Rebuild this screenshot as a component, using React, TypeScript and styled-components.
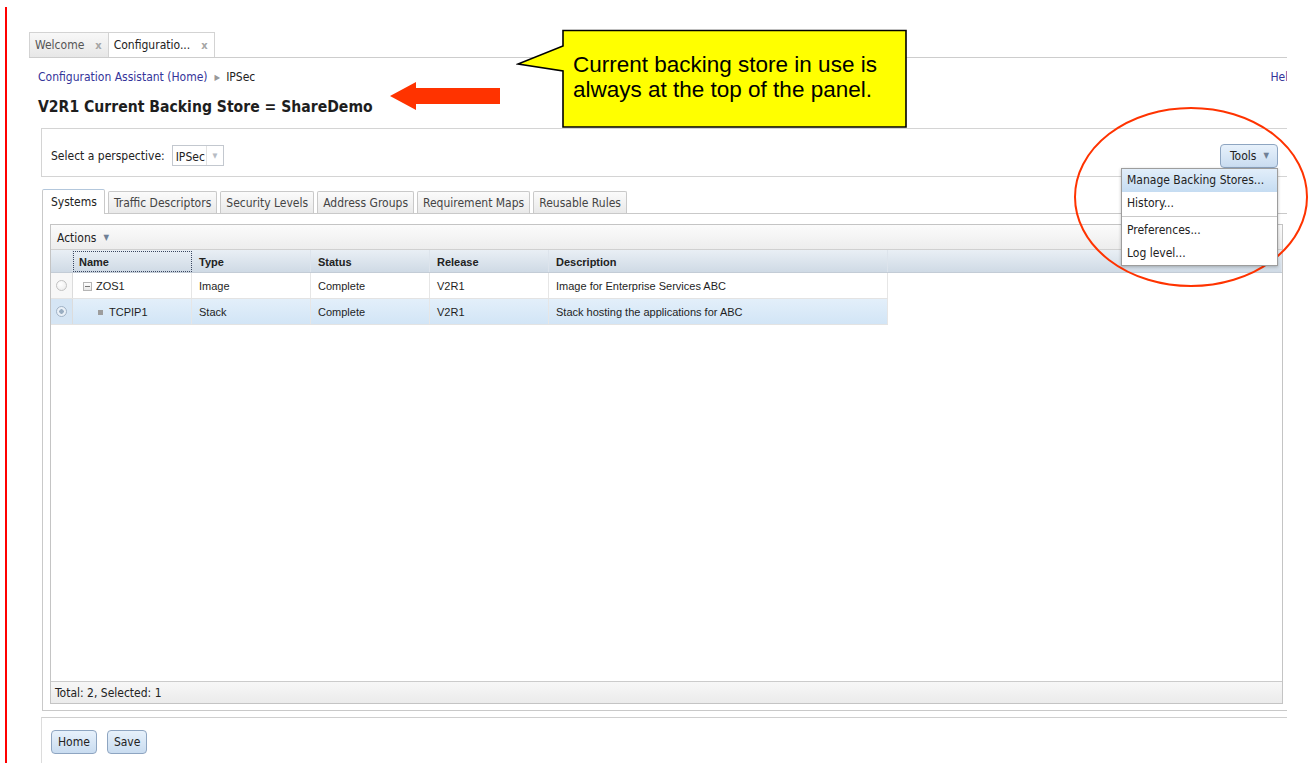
import React from "react";
import styled, { createGlobalStyle } from "styled-components";

const uiFont = `"DejaVu Sans Condensed", "DejaVu Sans", sans-serif`;
const cellFont = `"Liberation Sans", Arial, sans-serif`;

const GlobalStyle = createGlobalStyle`
  html, body {
    margin: 0;
    padding: 0;
    background: #fff;
  }
  body {
    font-family: ${uiFont};
    font-size: 12px;
    color: #222;
  }
`;

const Slide = styled.div`
  position: relative;
  width: 1309px;
  height: 763px;
  box-sizing: border-box;
  padding: 7px 0 0 5px;
  overflow: hidden;
`;

const Sheet = styled.div`
  height: 100%;
  box-sizing: border-box;
  border-left: 2px solid #ff0000;
  padding: 25px 0 0 22px;
`;

const Workbench = styled.div`
  width: 1258px;
  overflow: hidden;
`;

/* editor tabs along the top */
const EditorTabs = styled.div`
  display: flex;
  height: 25px;
  border-bottom: 1px solid #cdcdcd;
`;

const EditorTab = styled.div<{ $active?: boolean }>`
  display: flex;
  align-items: center;
  gap: 11px;
  padding: 0 6px 0 5px;
  border: 1px solid #d3d3d3;
  border-bottom: none;
  margin-right: -1px;
  background: ${(p) => (p.$active ? "#fff" : "linear-gradient(#f8f8f8, #e7e7e7)")};
  color: ${(p) => (p.$active ? "#222" : "#555")};
`;

const CloseX = styled.span`
  color: #a5a5a5;
  font-weight: bold;
  font-size: 11px;
`;

/* breadcrumb + help */
const Crumbs = styled.div`
  display: flex;
  align-items: center;
  height: 20px;
  margin-top: 9px;
  padding-left: 9px;
`;

const CrumbLink = styled.span`
  color: #34349a;
`;

const CrumbSep = styled.span`
  color: #999;
  font-size: 8px;
  margin: 0 6px 0 7px;
`;

const HelpLink = styled.span`
  margin-left: auto;
  margin-right: -8px;
  color: #34349a;
`;

const Heading = styled.h1`
  margin: 10px 0 0 9px;
  height: 20px;
  font-size: 15.6px;
  line-height: 20px;
  font-weight: bold;
  color: #1e1e1e;
`;

const Content = styled.div`
  margin: 11px -2px 0 12px;
`;

/* perspective selector bar */
const PerspectiveBar = styled.div`
  display: flex;
  align-items: center;
  justify-content: space-between;
  height: 49px;
  box-sizing: border-box;
  border: 1px solid #d4d4d4;
  padding: 6px 10px 0 9px;
`;

const Field = styled.div`
  display: flex;
  align-items: center;
  gap: 7px;
`;

const Select = styled.div`
  display: flex;
  height: 21px;
  box-sizing: border-box;
  border: 1px solid #c3c8cf;
  background: #fff;
`;

const SelectValue = styled.span`
  padding: 0 1px 0 3px;
  line-height: 21px;
  margin-top: 1px;
`;

const SelectArrow = styled.span`
  width: 16px;
  border-left: 1px solid #e2e2e2;
  color: #b7bcc4;
  font-size: 7px;
  display: flex;
  align-items: center;
  justify-content: center;
`;

const ToolsWrap = styled.div`
  position: relative;
`;

const Button = styled.button`
  display: flex;
  align-items: center;
  gap: 7px;
  height: 24px;
  padding: 0 6px;
  border: 1px solid #8ea5c1;
  border-radius: 4px;
  background: linear-gradient(#e7f1fb, #c9dcf0);
  font-family: ${uiFont};
  font-size: 12px;
  color: #222;
`;

const ToolsButton = styled(Button)`
  padding: 0 8px 0 9px;
`;

const Caret = styled.span`
  color: #6f8096;
  font-size: 8px;
`;

const Menu = styled.div`
  position: absolute;
  top: 24px;
  right: 0;
  width: 157px;
  box-sizing: border-box;
  border: 1px solid #9d9d9d;
  background: #fff;
  box-shadow: 0 1px 3px rgba(0, 0, 0, 0.25);
  z-index: 5;
`;

const MenuItem = styled.div<{ $hot?: boolean }>`
  height: 23px;
  line-height: 23px;
  padding: 0 5px;
  white-space: nowrap;
  color: #222;
  background: ${(p) => (p.$hot ? "linear-gradient(#e2eefa, #c5dcf2)" : "transparent")};
`;

const MenuSep = styled.div`
  height: 1px;
  margin: 1px 0 2px;
  background: #c9c9c9;
`;

/* module tabs */
const ModuleTabs = styled.div`
  display: flex;
  align-items: flex-end;
  height: 24px;
  margin: 12px 0 0 1px;
`;

const ModuleTab = styled.div<{ $active?: boolean }>`
  position: relative;
  display: flex;
  align-items: center;
  height: ${(p) => (p.$active ? "25px" : "22px")};
  margin-bottom: ${(p) => (p.$active ? "-1px" : "0")};
  margin-right: 3px;
  padding: 0 5px 0 ${(p) => (p.$active ? "8px" : "5px")};
  padding-right: ${(p) => (p.$active ? "7px" : "5px")};
  box-sizing: border-box;
  border: 1px solid #c9c9c9;
  border-top-color: ${(p) => (p.$active ? "#b3c7dc" : "#c9c9c9")};
  border-bottom: none;
  border-radius: 2px 2px 0 0;
  background: ${(p) => (p.$active ? "#fff" : "linear-gradient(#fbfbfb, #e9e9e9)")};
  color: ${(p) => (p.$active ? "#222" : "#444")};
  z-index: ${(p) => (p.$active ? 1 : 0)};
`;

const TabPanel = styled.div`
  margin-left: 1px;
  border: 1px solid #c9c9c9;
  padding: 10px 5px 6px 7px;
`;

/* data grid */
const Grid = styled.div`
  display: flex;
  flex-direction: column;
  height: 480px;
  box-sizing: border-box;
  border: 1px solid #c4c4c4;
`;

const Toolbar = styled.div`
  display: flex;
  align-items: center;
  gap: 7px;
  height: 25px;
  box-sizing: border-box;
  padding: 1px 0 0 6px;
  border-bottom: 1px solid #d0d0d0;
  background: linear-gradient(#fbfbfb, #ededed);
`;

const columns = "22px 119px 119px 119px 119px 339px";

const HeaderRow = styled.div`
  display: grid;
  grid-template-columns: ${columns} 1fr;
  height: 23px;
  box-sizing: border-box;
  border-bottom: 1px solid #c3ccd6;
  background: linear-gradient(#e9eff5, #cfdae5);
  font-family: ${cellFont};
  font-weight: bold;
  font-size: 11px;
`;

const HeadCell = styled.div<{ $focus?: boolean }>`
  display: flex;
  align-items: center;
  padding: 1px 0 0 ${(p) => (p.$focus ? "5px" : "7px")};
  border-right: 1px solid #dde4ec;
  border: ${(p) => (p.$focus ? "1px dotted #3a4660" : undefined)};
  margin: ${(p) => (p.$focus ? "1px 0 0 0" : "0")};
`;

const Body = styled.div`
  flex: 1;
  background: #fff;
`;

const Row = styled.div<{ $selected?: boolean }>`
  display: grid;
  grid-template-columns: ${columns};
  width: 837px;
  height: 26px;
  box-sizing: border-box;
  border-bottom: 1px solid #e3e3e3;
  background: ${(p) => (p.$selected ? "linear-gradient(#e3effa, #d2e5f6)" : "#fff")};
  font-family: ${cellFont};
  font-size: 11px;
  color: #1e1e1e;
`;

const Cell = styled.div`
  display: flex;
  align-items: center;
  padding: 1px 0 0 7px;
  border-right: 1px solid #e6e6e6;
`;

const RadioCell = styled.div<{ $selected?: boolean }>`
  display: flex;
  align-items: center;
  justify-content: center;
  border-right: 1px solid #dcdcdc;
  background: ${(p) => (p.$selected ? "#d5e5f4" : "#f7f7f7")};
`;

const Radio = styled.span<{ $checked?: boolean }>`
  width: 11px;
  height: 11px;
  box-sizing: border-box;
  border-radius: 50%;
  border: 1px solid ${(p) => (p.$checked ? "#a2b3c6" : "#c2c2c2")};
  background: ${(p) =>
    p.$checked
      ? "radial-gradient(circle, #9aaec2 0 2px, #e9f0f7 2.5px)"
      : "radial-gradient(circle at 40% 35%, #fff, #e9e9e9)"};
`;

const NameCell = styled(Cell)<{ $depth: number }>`
  padding-left: ${(p) => (p.$depth ? 25 : 10)}px;
  gap: ${(p) => (p.$depth ? 6 : 4)}px;
`;

const Expander = styled.span`
  position: relative;
  width: 9px;
  height: 9px;
  box-sizing: border-box;
  border: 1px solid #b5b5b5;
  background: linear-gradient(#fff, #e6e6e6);
  &::after {
    content: "";
    position: absolute;
    left: 1px;
    top: 3px;
    width: 5px;
    height: 1px;
    background: #777;
  }
`;

const Leaf = styled.span`
  width: 5px;
  height: 5px;
  background: #9d9d9d;
`;

const Footer = styled.div`
  display: flex;
  align-items: center;
  height: 22px;
  box-sizing: border-box;
  padding-left: 4px;
  border-top: 1px solid #cbcbcb;
  background: linear-gradient(#f7f7f7, #ebebeb);
`;

const ButtonBar = styled.div`
  display: flex;
  gap: 10px;
  margin-top: 6px;
  height: 60px;
  padding: 12px 0 0 9px;
  border-top: 1px solid #cfcfcf;
  border-left: 1px solid #dcdcdc;
`;

/* slide annotations drawn over the console */
const Callout = styled.div`
  position: absolute;
  left: 516px;
  top: 29px;
  width: 392px;
  height: 100px;
`;

const CalloutShape = styled.svg`
  position: absolute;
  inset: 0;
`;

const CalloutText = styled.div`
  position: relative;
  padding: 23px 0 0 57px;
  font-family: ${cellFont};
  font-size: 22.5px;
  line-height: 25px;
  color: #000;
`;

const Pointer = styled.svg`
  position: absolute;
  left: 388px;
  top: 80px;
`;

const Ring = styled.svg`
  position: absolute;
  left: 1070px;
  top: 104px;
  pointer-events: none;
`;

type Item = {
  radio: boolean;
  depth: number;
  name: string;
  type: string;
  status: string;
  release: string;
  description: string;
};

const systems: Item[] = [
  { radio: false, depth: 0, name: "ZOS1", type: "Image", status: "Complete", release: "V2R1", description: "Image for Enterprise Services ABC" },
  { radio: true, depth: 1, name: "TCPIP1", type: "Stack", status: "Complete", release: "V2R1", description: "Stack hosting the applications for ABC" },
];

const moduleTabs = ["Systems", "Traffic Descriptors", "Security Levels", "Address Groups", "Requirement Maps", "Reusable Rules"];

export default function App() {
  return (
    <>
      <GlobalStyle />
      <Slide>
        <Sheet>
          <Workbench>
            <EditorTabs>
              <EditorTab>
                Welcome <CloseX>x</CloseX>
              </EditorTab>
              <EditorTab $active>
                Configuratio... <CloseX>x</CloseX>
              </EditorTab>
            </EditorTabs>

            <Crumbs>
              <CrumbLink>Configuration Assistant (Home)</CrumbLink>
              <CrumbSep>▶</CrumbSep>
              <span>IPSec</span>
              <HelpLink>Help</HelpLink>
            </Crumbs>

            <Heading>V2R1 Current Backing Store = ShareDemo</Heading>

            <Content>
              <PerspectiveBar>
                <Field>
                  Select a perspective:
                  <Select>
                    <SelectValue>IPSec</SelectValue>
                    <SelectArrow>▼</SelectArrow>
                  </Select>
                </Field>
                <ToolsWrap>
                  <ToolsButton>
                    Tools <Caret>▼</Caret>
                  </ToolsButton>
                  <Menu>
                    <MenuItem $hot>Manage Backing Stores...</MenuItem>
                    <MenuItem>History...</MenuItem>
                    <MenuSep />
                    <MenuItem>Preferences...</MenuItem>
                    <MenuItem>Log level...</MenuItem>
                  </Menu>
                </ToolsWrap>
              </PerspectiveBar>

              <ModuleTabs>
                {moduleTabs.map((t, i) => (
                  <ModuleTab key={t} $active={i === 0}>
                    {t}
                  </ModuleTab>
                ))}
              </ModuleTabs>

              <TabPanel>
                <Grid>
                  <Toolbar>
                    Actions <Caret>▼</Caret>
                  </Toolbar>
                  <HeaderRow>
                    <HeadCell />
                    <HeadCell $focus>Name</HeadCell>
                    <HeadCell>Type</HeadCell>
                    <HeadCell>Status</HeadCell>
                    <HeadCell>Release</HeadCell>
                    <HeadCell>Description</HeadCell>
                    <HeadCell />
                  </HeaderRow>
                  <Body>
                    {systems.map((s) => (
                      <Row key={s.name} $selected={s.radio}>
                        <RadioCell $selected={s.radio}>
                          <Radio $checked={s.radio} />
                        </RadioCell>
                        <NameCell $depth={s.depth}>
                          {s.depth ? <Leaf /> : <Expander />}
                          {s.name}
                        </NameCell>
                        <Cell>{s.type}</Cell>
                        <Cell>{s.status}</Cell>
                        <Cell>{s.release}</Cell>
                        <Cell>{s.description}</Cell>
                      </Row>
                    ))}
                  </Body>
                  <Footer>Total: 2, Selected: 1</Footer>
                </Grid>
              </TabPanel>

              <ButtonBar>
                <Button>Home</Button>
                <Button>Save</Button>
              </ButtonBar>
            </Content>
          </Workbench>
        </Sheet>

        <Pointer width="114" height="32" viewBox="0 0 114 32">
          <polygon points="2,16 28,2 28,8 112,8 112,24 28,24 28,30" fill="#ff3300" />
        </Pointer>

        <Callout>
          <CalloutShape width="392" height="100" viewBox="0 0 392 100">
            <path
              d="M47 1.5 H390 V98 H47 V42 L2 35 L47 17 Z"
              fill="#ffff00"
              stroke="#000"
              strokeWidth="1.6"
              strokeLinejoin="miter"
            />
          </CalloutShape>
          <CalloutText>
            Current backing store in use is
            <br />
            always at the top of the panel.
          </CalloutText>
        </Callout>

        <Ring width="239" height="190" viewBox="0 0 239 190">
          <ellipse cx="121" cy="93" rx="116" ry="89" fill="none" stroke="#ff3300" strokeWidth="2" />
        </Ring>
      </Slide>
    </>
  );
}
